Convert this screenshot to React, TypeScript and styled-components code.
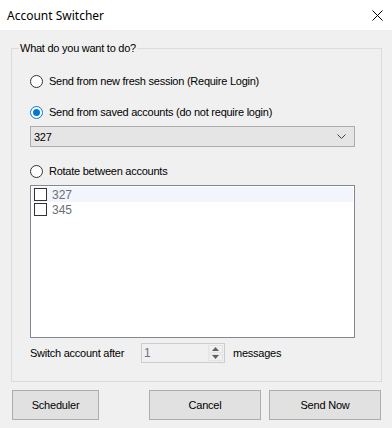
import React, { useState } from "react";
import styled, { createGlobalStyle } from "styled-components";

const GlobalStyle = createGlobalStyle`
  html, body {
    margin: 0;
    padding: 0;
    background: #f0f0f0;
  }
  body {
    font-family: "Liberation Sans", Arial, sans-serif;
    font-size: 11px;
    letter-spacing: -0.25px;
    color: #000;
  }
`;

const Window = styled.div`
  width: 392px;
  height: 428px;
  display: flex;
  flex-direction: column;
  background: #f0f0f0;
  overflow: hidden;
`;

const TitleBar = styled.div`
  height: 30px;
  flex: none;
  background: #fff;
  display: flex;
  align-items: center;
  justify-content: space-between;
  padding: 0 9px 0 7px;
  font-family: "Noto Sans", "Liberation Sans", sans-serif;
  font-size: 12px;
  letter-spacing: 0;
`;

const Body = styled.div`
  flex: 1;
  display: flex;
  flex-direction: column;
  padding: 12px 10px 0 11px;
`;

const Group = styled.fieldset`
  margin: 0;
  height: 340px;
  box-sizing: border-box;
  border: 1px solid #dcdcdc;
  padding: 0 26px 0 18px;
  display: flex;
  flex-direction: column;
`;

const Legend = styled.legend`
  padding: 0 1px;
  margin-left: -11px;
  line-height: 13px;
`;

const RadioRow = styled.label<{ $top: number }>`
  display: flex;
  align-items: center;
  gap: 6px;
  height: 16px;
  margin-top: ${(p) => p.$top}px;
`;

const RadioDot = styled.span<{ $checked?: boolean }>`
  width: 13px;
  height: 13px;
  box-sizing: border-box;
  border-radius: 50%;
  border: 1px solid ${(p) => (p.$checked ? "#0078d7" : "#333")};
  background: #fff;
  display: flex;
  align-items: center;
  justify-content: center;
  flex: none;

  &::after {
    content: "";
    width: 7px;
    height: 7px;
    border-radius: 50%;
    background: ${(p) => (p.$checked ? "#0078d7" : "transparent")};
  }
`;

const Combo = styled.div`
  margin-top: 6px;
  height: 21px;
  box-sizing: border-box;
  border: 1px solid #adadad;
  background: #e5e5e5;
  display: flex;
  align-items: center;
  justify-content: space-between;
  padding: 0 8px 0 3px;
`;

const List = styled.div`
  margin-top: 6px;
  height: 153px;
  box-sizing: border-box;
  border: 1px solid #828790;
  background: #fff;
  padding: 1px 1px;
`;

const ListItem = styled.div<{ $hot?: boolean }>`
  height: 15px;
  display: flex;
  align-items: center;
  gap: 5px;
  padding-left: 2px;
  background: ${(p) => (p.$hot ? "#f2f6fc" : "transparent")};
  color: #6d6d78;
  font-size: 12px;
  letter-spacing: 0;
`;

const CheckBox = styled.span`
  width: 13px;
  height: 13px;
  box-sizing: border-box;
  border: 1px solid #333;
  background: #fff;
  flex: none;
`;

const SwitchRow = styled.div`
  margin-top: 5px;
  display: flex;
  align-items: center;
  height: 20px;
`;

const Spinner = styled.div`
  margin-left: 17px;
  width: 84px;
  height: 20px;
  box-sizing: border-box;
  border: 1px solid #cccccc;
  background: #f0f0f0;
  display: flex;
  align-items: stretch;
  color: #7a6a8a;
  font-size: 12px;
`;

const SpinValue = styled.span`
  flex: 1;
  padding-left: 2px;
  display: flex;
  align-items: center;
`;

const SpinButtons = styled.div`
  width: 15px;
  display: flex;
  flex-direction: column;
  padding: 1px 1px 1px 0;
  gap: 1px;
`;

const SpinButton = styled.div`
  flex: 1;
  background: #f0f0f0;
  border: 1px solid #e3e3e3;
  display: flex;
  align-items: center;
  justify-content: center;
`;

const MessagesText = styled.span`
  margin-left: 8px;
`;

const ButtonBar = styled.div`
  display: flex;
  margin-top: 8px;
  padding-left: 1px;
`;

const Button = styled.button<{ $width: number; $gap?: number }>`
  width: ${(p) => p.$width}px;
  height: 30px;
  margin-left: ${(p) => p.$gap ?? 0}px;
  box-sizing: border-box;
  border: 1px solid #adadad;
  background: #e1e1e1;
  font-family: "Liberation Sans", Arial, sans-serif;
  font-size: 11px;
  letter-spacing: -0.2px;
  color: #000;
  padding: 0;
`;

const Arrow: React.FC<{ up?: boolean }> = ({ up }) => (
  <svg width="7" height="4" viewBox="0 0 7 4">
    <path d={up ? "M0 4 L3.5 0 L7 4 Z" : "M0 0 L3.5 4 L7 0 Z"} fill="#606060" />
  </svg>
);

export default function App() {
  const [mode, setMode] = useState(1);
  const options = [
    "Send from new fresh session (Require Login)",
    "Send from saved accounts (do not require login)",
  ];

  return (
    <Window>
      <GlobalStyle />
      <TitleBar>
        <span>Account Switcher</span>
        <svg width="11" height="11" viewBox="0 0 11 11">
          <path d="M0.5 0.5 L10.5 10.5 M10.5 0.5 L0.5 10.5" stroke="#000" strokeWidth="1" />
        </svg>
      </TitleBar>
      <Body>
        <Group>
          <Legend>What do you want to do?</Legend>
          <RadioRow $top={18} onClick={() => setMode(0)}>
            <RadioDot $checked={mode === 0} />
            {options[0]}
          </RadioRow>
          <RadioRow $top={15} onClick={() => setMode(1)}>
            <RadioDot $checked={mode === 1} />
            {options[1]}
          </RadioRow>
          <Combo>
            <span>327</span>
            <svg width="9" height="5" viewBox="0 0 9 5">
              <path d="M0.5 0.5 L4.5 4.5 L8.5 0.5" stroke="#404040" fill="none" />
            </svg>
          </Combo>
          <RadioRow $top={16} onClick={() => setMode(2)}>
            <RadioDot $checked={mode === 2} />
            Rotate between accounts
          </RadioRow>
          <List>
            <ListItem $hot>
              <CheckBox />
              327
            </ListItem>
            <ListItem>
              <CheckBox />
              345
            </ListItem>
          </List>
          <SwitchRow>
            <span>Switch account after</span>
            <Spinner>
              <SpinValue>1</SpinValue>
              <SpinButtons>
                <SpinButton>
                  <Arrow up />
                </SpinButton>
                <SpinButton>
                  <Arrow />
                </SpinButton>
              </SpinButtons>
            </Spinner>
            <MessagesText>messages</MessagesText>
          </SwitchRow>
        </Group>
        <ButtonBar>
          <Button $width={87}>Scheduler</Button>
          <Button $width={112} $gap={50}>
            Cancel
          </Button>
          <Button $width={112} $gap={8}>
            Send Now
          </Button>
        </ButtonBar>
      </Body>
    </Window>
  );
}
